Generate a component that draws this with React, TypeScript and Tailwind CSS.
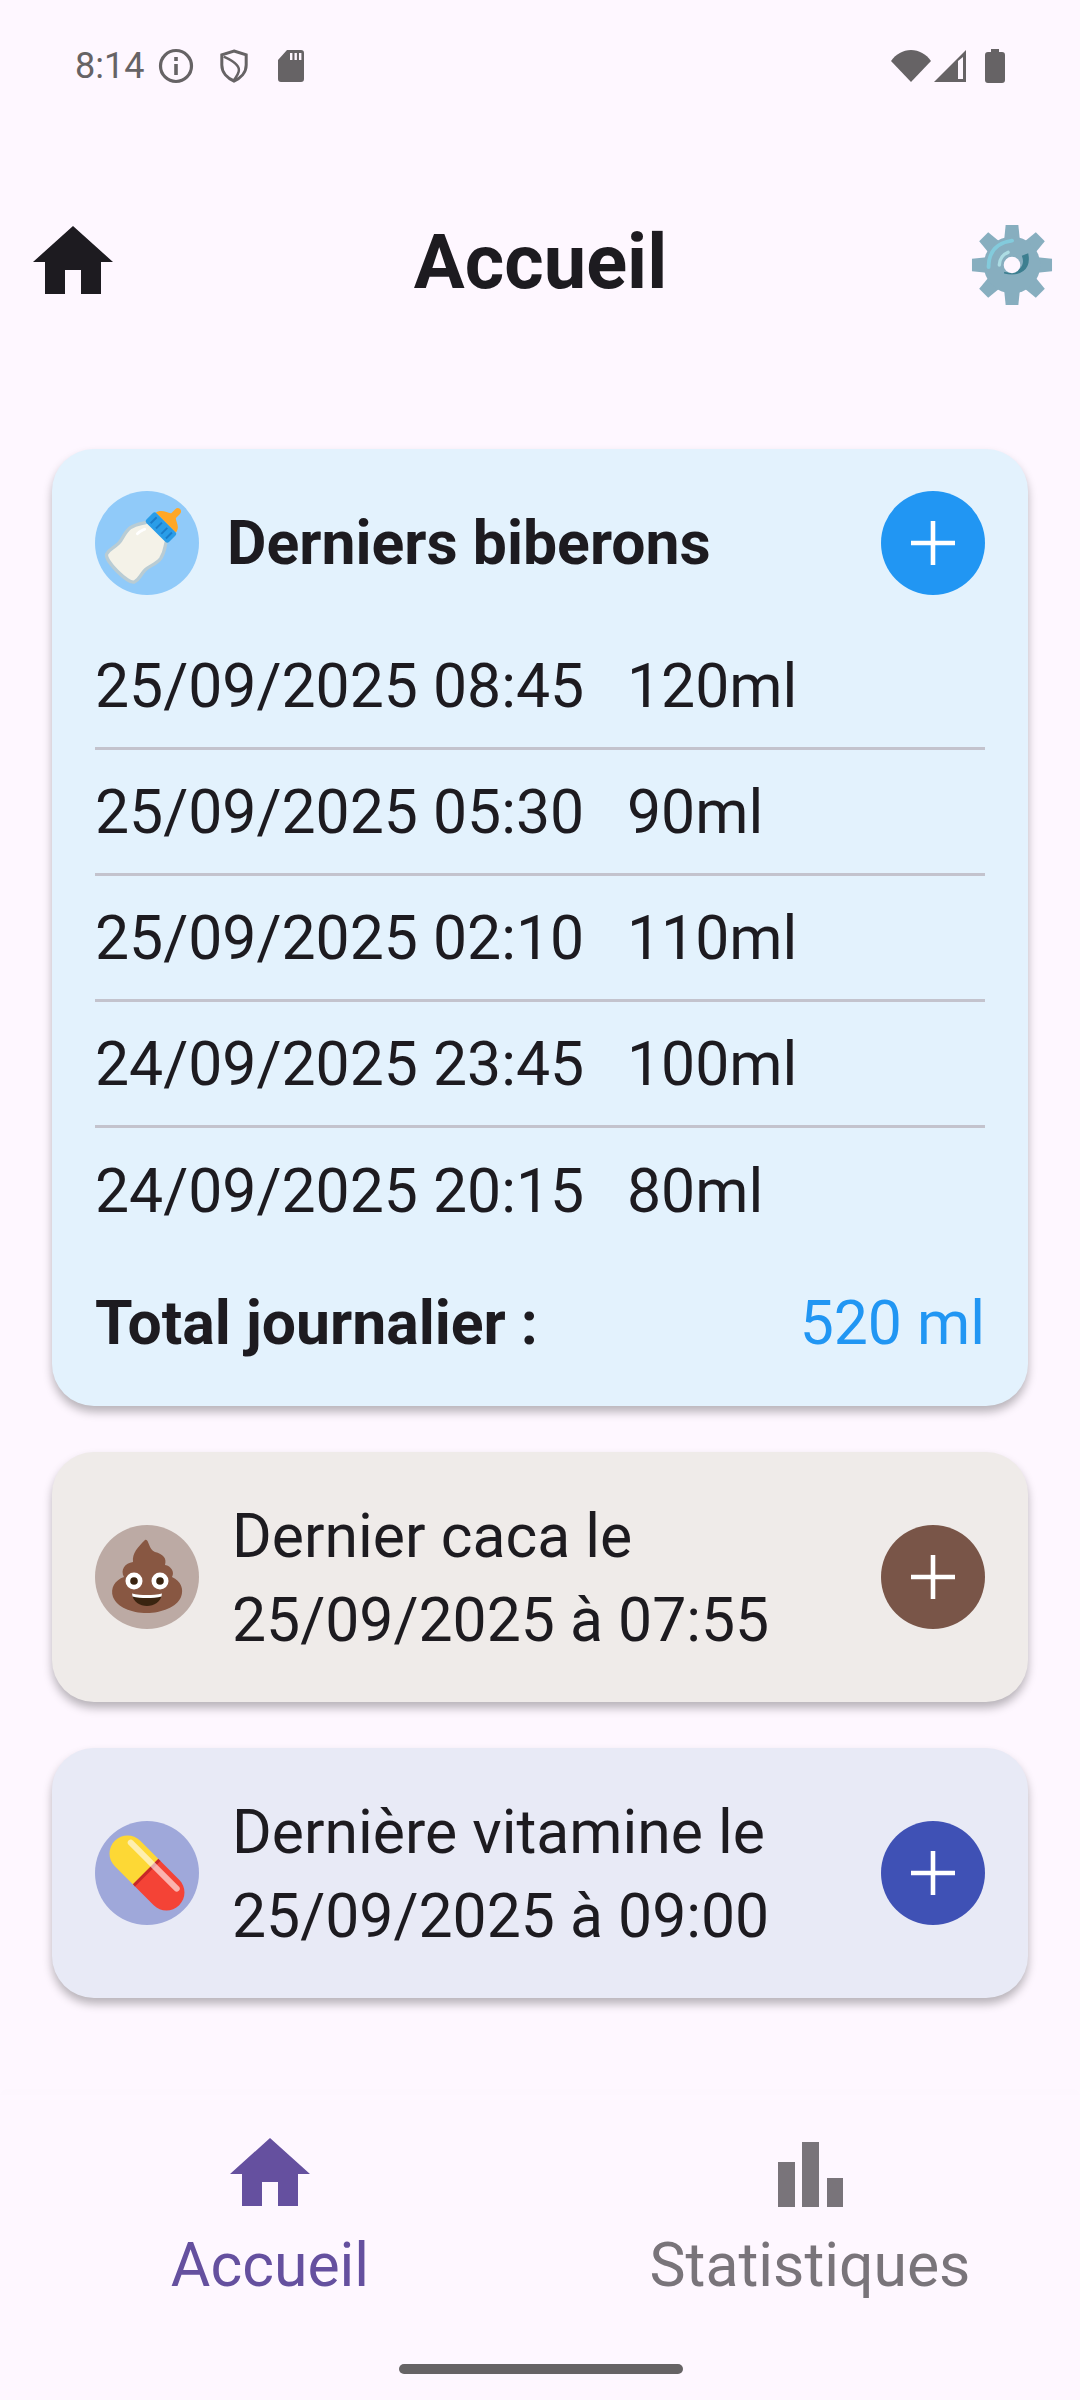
const ROBOTO = 'font-["Roboto",sans-serif]'

const BOTTLES = [
  { when: '25/09/2025 08:45', amount: '120ml' },
  { when: '25/09/2025 05:30', amount: '90ml' },
  { when: '25/09/2025 02:10', amount: '110ml' },
  { when: '24/09/2025 23:45', amount: '100ml' },
  { when: '24/09/2025 20:15', amount: '80ml' },
]

function HomeIcon({ className }: { className: string }) {
  return (
    <svg viewBox="0 0 24 24" className={className} fill="currentColor">
      <path d="M10 20v-6h4v6h5v-8h3L12 3 2 12h3v8z" />
    </svg>
  )
}

function PlusButton({ className }: { className: string }) {
  return (
    <div className={`w-[104px] h-[104px] rounded-full flex items-center justify-center shrink-0 ${className}`}>
      <svg viewBox="0 0 48 48" className="w-[44px] h-[44px]" fill="#fff">
        <path d="M21.5 0h5v21.5H48v5H26.5V48h-5V26.5H0v-5h21.5z" />
      </svg>
    </div>
  )
}

function BottleEmoji() {
  return (
    <svg viewBox="0 0 104 104" className="w-[104px] h-[104px]">
      <g transform="translate(54 48.5) rotate(45) scale(0.94) translate(-52 -41.5)">
        <path d="M38 27 C38 33 31 36 29 47 C28 55 32 61 32 67 C32 75 29 79 31 84 C33 91 71 91 73 84 C75 79 72 75 72 67 C72 61 76 55 75 47 C73 36 66 33 66 27 Z" fill="#f4f2e8" stroke="#b9ccd4" strokeWidth="3.5" />
        <rect x="35" y="16" width="34" height="15" rx="3" fill="#2a9de8" />
        <path d="M41 19v9M49 19v9M57 19v9M64 19v9" stroke="#1a7cc9" strokeWidth="2" />
        <path d="M37 16 C39 8 47 8 49 5 L49 -1 C49 -6 56 -6 56 -1 L56 5 C58 8 66 8 67 16 Z" fill="#ffa726" />
        <path d="M41 37 C40 40 39 42 39 46" stroke="#fff" strokeWidth="3" strokeLinecap="round" fill="none" />
      </g>
    </svg>
  )
}

function PoopEmoji() {
  return (
    <svg viewBox="0 0 104 104" className="w-[104px] h-[104px]">
      <path d="M50 15 C54 13 53 24 60 27 C68 29 72 33 70 40 C76 41 80 47 77 52 C86 56 89 64 86 72 C82 82 66 88 52 88 C36 88 22 82 18 72 C15 63 20 55 29 52 C25 45 30 38 38 37 C37 28 43 22 50 15 Z" fill="#885742" />
      <circle cx="39" cy="56" r="8.5" fill="#fff" />
      <circle cx="65" cy="56" r="8.5" fill="#fff" />
      <circle cx="39" cy="56" r="3.8" fill="#3a2410" />
      <circle cx="65" cy="56" r="3.8" fill="#3a2410" />
      <path d="M37 69 C46 71 58 71 67 69 C66 77 59 81 52 81 C45 81 38 77 37 69 Z" fill="#3a2410" />
      <path d="M37 68.5 C46 70.5 58 70.5 67 68.5 L66.5 71.5 C58 73.5 46 73.5 37.5 71.5 Z" fill="#fff" />
    </svg>
  )
}

function PillEmoji() {
  return (
    <svg viewBox="0 0 104 104" className="w-[104px] h-[104px]">
      <g transform="rotate(45 52 52)">
        <path d="M52 34 H24.5 C14.5 34 6.5 42 6.5 52 C6.5 62 14.5 70 24.5 70 H52 Z" fill="#fdd835" />
        <path d="M52 34 H79.5 C89.5 34 97.5 42 97.5 52 C97.5 62 89.5 70 79.5 70 H52 Z" fill="#f44336" />
        <rect x="50" y="34" width="3" height="36" fill="#c62828" />
        <path d="M19 42 H84" stroke="#fff" strokeOpacity="0.6" strokeWidth="6" strokeLinecap="round" />
      </g>
    </svg>
  )
}

function GearEmoji() {
  const teeth = [0, 45, 90, 135, 180, 225, 270, 315]
  return (
    <svg viewBox="0 0 84 84" className="w-[82px] h-[82px]">
      {teeth.map((a) => (
        <path key={a} d="M35.5 1h13l2 20h-17z" fill="#87aebf" transform={`rotate(${a} 42 42)`} />
      ))}
      <circle cx="42" cy="42" r="29" fill="#87aebf" />
      <path d="M18 44 C18 28 27 19 42 17" stroke="#83cbdc" strokeWidth="4" strokeLinecap="round" fill="none" />
      <path d="M29 42 C29 36 33 31 38 29" stroke="#addde4" strokeWidth="3.5" strokeLinecap="round" fill="none" />
      <path d="M58 31 C61 46 50 54 34 50 C48 52 57 44 53 33 Z" fill="#3d7f90" stroke="#3d7f90" strokeWidth="1.5" />
      <circle cx="42" cy="42" r="8.5" fill="#fef7ff" />
    </svg>
  )
}

function StatusBar() {
  return (
    <div className="h-[132px] pl-[75px] pr-[75px] flex items-center justify-between text-[#666365]">
      <div className="flex items-center">
        <span className="text-[36px] leading-none w-[70px]">8:14</span>
        <svg viewBox="0 0 36 36" className="w-[36px] h-[36px] ml-[13px]" fill="none" stroke="currentColor">
          <circle cx="18" cy="18" r="15.5" strokeWidth="3.2" />
          <path d="M18 16v11" strokeWidth="3.6" />
          <path d="M18 9v4" strokeWidth="3.6" />
        </svg>
        <svg viewBox="0 0 32 36" className="w-[30px] h-[36px] ml-[25px]" fill="none" stroke="currentColor" strokeWidth="3.2">
          <path d="M16 2 L29 6 V17 C29 25 23 31 16 34 C9 31 3 25 3 17 V6 Z" />
          <path d="M5 8 C14 12 23 17 21 24 C20 28 18 30 16 33" strokeWidth="2.6" />
        </svg>
        <svg viewBox="0 0 26 32" className="w-[26px] h-[32px] ml-[29px]" fill="currentColor">
          <path fillRule="evenodd" d="M9 0h14a3 3 0 0 1 3 3v26a3 3 0 0 1-3 3H3a3 3 0 0 1-3-3V10zM12 3v7h2.4V3zm4.5 0v7h2.4V3zm4.5 0v7h2.4V3z" />
        </svg>
      </div>
      <div className="flex items-center">
        <svg viewBox="0 0 40 32" className="w-[40px] h-[32px]" fill="currentColor">
          <path d="M20 32 L0 11 C5 4 12 0 20 0 C28 0 35 4 40 11 Z" />
        </svg>
        <svg viewBox="0 0 32 32" className="w-[32px] h-[32px] ml-[3px]" fill="currentColor">
          <path fillRule="evenodd" d="M32 0v32H0zM24 11v18h5V7z" />
        </svg>
        <svg viewBox="0 0 20 34" className="w-[20px] h-[34px] ml-[19px]" fill="currentColor">
          <path d="M6 0h8v3h3a3 3 0 0 1 3 3v25a3 3 0 0 1-3 3H3a3 3 0 0 1-3-3V6a3 3 0 0 1 3-3h3z" />
        </svg>
      </div>
    </div>
  )
}

function EventCard({ bg, circle, button, icon, lines }: { bg: string; circle: string; button: string; icon: React.ReactNode; lines: string[] }) {
  return (
    <div className={`rounded-[42px] px-[43px] py-[41px] flex items-center shadow-[0_6px_10px_rgba(0,0,0,0.28)] ${bg}`}>
      <div className={`w-[104px] h-[104px] rounded-full shrink-0 ${circle}`}>{icon}</div>
      <div className="flex-1 ml-[33px] pt-[2px] -mb-[2px] text-[60.7px] leading-[84px] text-[#1d1b20]">
        {lines.map((l) => (
          <div key={l}>{l}</div>
        ))}
      </div>
      <PlusButton className={button} />
    </div>
  )
}

export default function App() {
  return (
    <div className={`h-[2400px] w-[1080px] bg-[#fef7ff] flex flex-col overflow-hidden ${ROBOTO}`}>
      <StatusBar />

      <div className="h-[317px] pt-[80px] pl-[25px] pr-[27px] flex items-start justify-between text-[#1d1b20]">
        <HomeIcon className="w-[96px] h-[96px] mt-[2px]" />
        <h1 className="text-[75.8px] font-bold leading-[96px] mt-[3px] ml-[-11px]">Accueil</h1>
        <div className="mt-[12px]">
          <GearEmoji />
        </div>
      </div>

      <div className="flex-1 px-[52px] flex flex-col gap-[46px]">
        <div className="rounded-[42px] bg-[#e3f2fd] px-[43px] pt-[42px] pb-[37px] shadow-[0_6px_10px_rgba(0,0,0,0.28)]">
          <div className="flex items-center">
            <div className="w-[104px] h-[104px] rounded-full bg-[#90caf9] shrink-0">
              <BottleEmoji />
            </div>
            <span className="flex-1 ml-[28px] pt-[2px] text-[60.7px] font-bold text-[#1d1b20] leading-none">Derniers biberons</span>
            <PlusButton className="bg-[#2196f3]" />
          </div>
          <div className="mt-[29px]">
            {BOTTLES.map((b, i) => (
              <div key={b.when} className={`h-[126px] pt-[2px] flex items-center text-[60.7px] text-[#1d1b20] ${i < BOTTLES.length - 1 ? 'border-b-[3px] border-[#c3c3cd]' : ''}`}>
                <span className="w-[532px] shrink-0">{b.when}</span>
                <span>{b.amount}</span>
              </div>
            ))}
          </div>
          <div className="flex items-center justify-between h-[92px] pt-[2px] text-[60.7px] leading-none mt-[23px]">
            <span className="font-bold text-[#1d1b20]">Total journalier :</span>
            <span className="text-[#2196f3]">520 ml</span>
          </div>
        </div>

        <EventCard
          bg="bg-[#efebe9]"
          circle="bg-[#bcaaa4]"
          button="bg-[#795548]"
          icon={<PoopEmoji />}
          lines={['Dernier caca le', '25/09/2025 à 07:55']}
        />
        <EventCard
          bg="bg-[#e8eaf6]"
          circle="bg-[#9fa8da]"
          button="bg-[#3f51b5]"
          icon={<PillEmoji />}
          lines={['Dernière vitamine le', '25/09/2025 à 09:00']}
        />
      </div>

      <div className="h-[305px] relative bg-[#fef7ff] shadow-[0_-6px_8px_rgba(0,0,0,0.006)]">
        <div className="grid grid-cols-2 pt-[31px]">
          <div className="flex flex-col items-center text-[#65509f]">
            <HomeIcon className="w-[96px] h-[96px]" />
            <span className="text-[60.7px] leading-[66px] mt-[11px]">Accueil</span>
          </div>
          <div className="flex flex-col items-center text-[#79747a]">
            <svg viewBox="0 0 65 96" className="w-[65px] h-[96px]" fill="currentColor">
              <rect x="0" y="36" width="17" height="45" />
              <rect x="24" y="16" width="17" height="65" />
              <rect x="49" y="52" width="16" height="29" />
            </svg>
            <span className="text-[60.7px] leading-[66px] mt-[11px]">Statistiques</span>
          </div>
        </div>
        <div className="absolute left-[399px] bottom-[26px] w-[284px] h-[10px] rounded-full bg-[#666365]" />
      </div>
    </div>
  )
}
